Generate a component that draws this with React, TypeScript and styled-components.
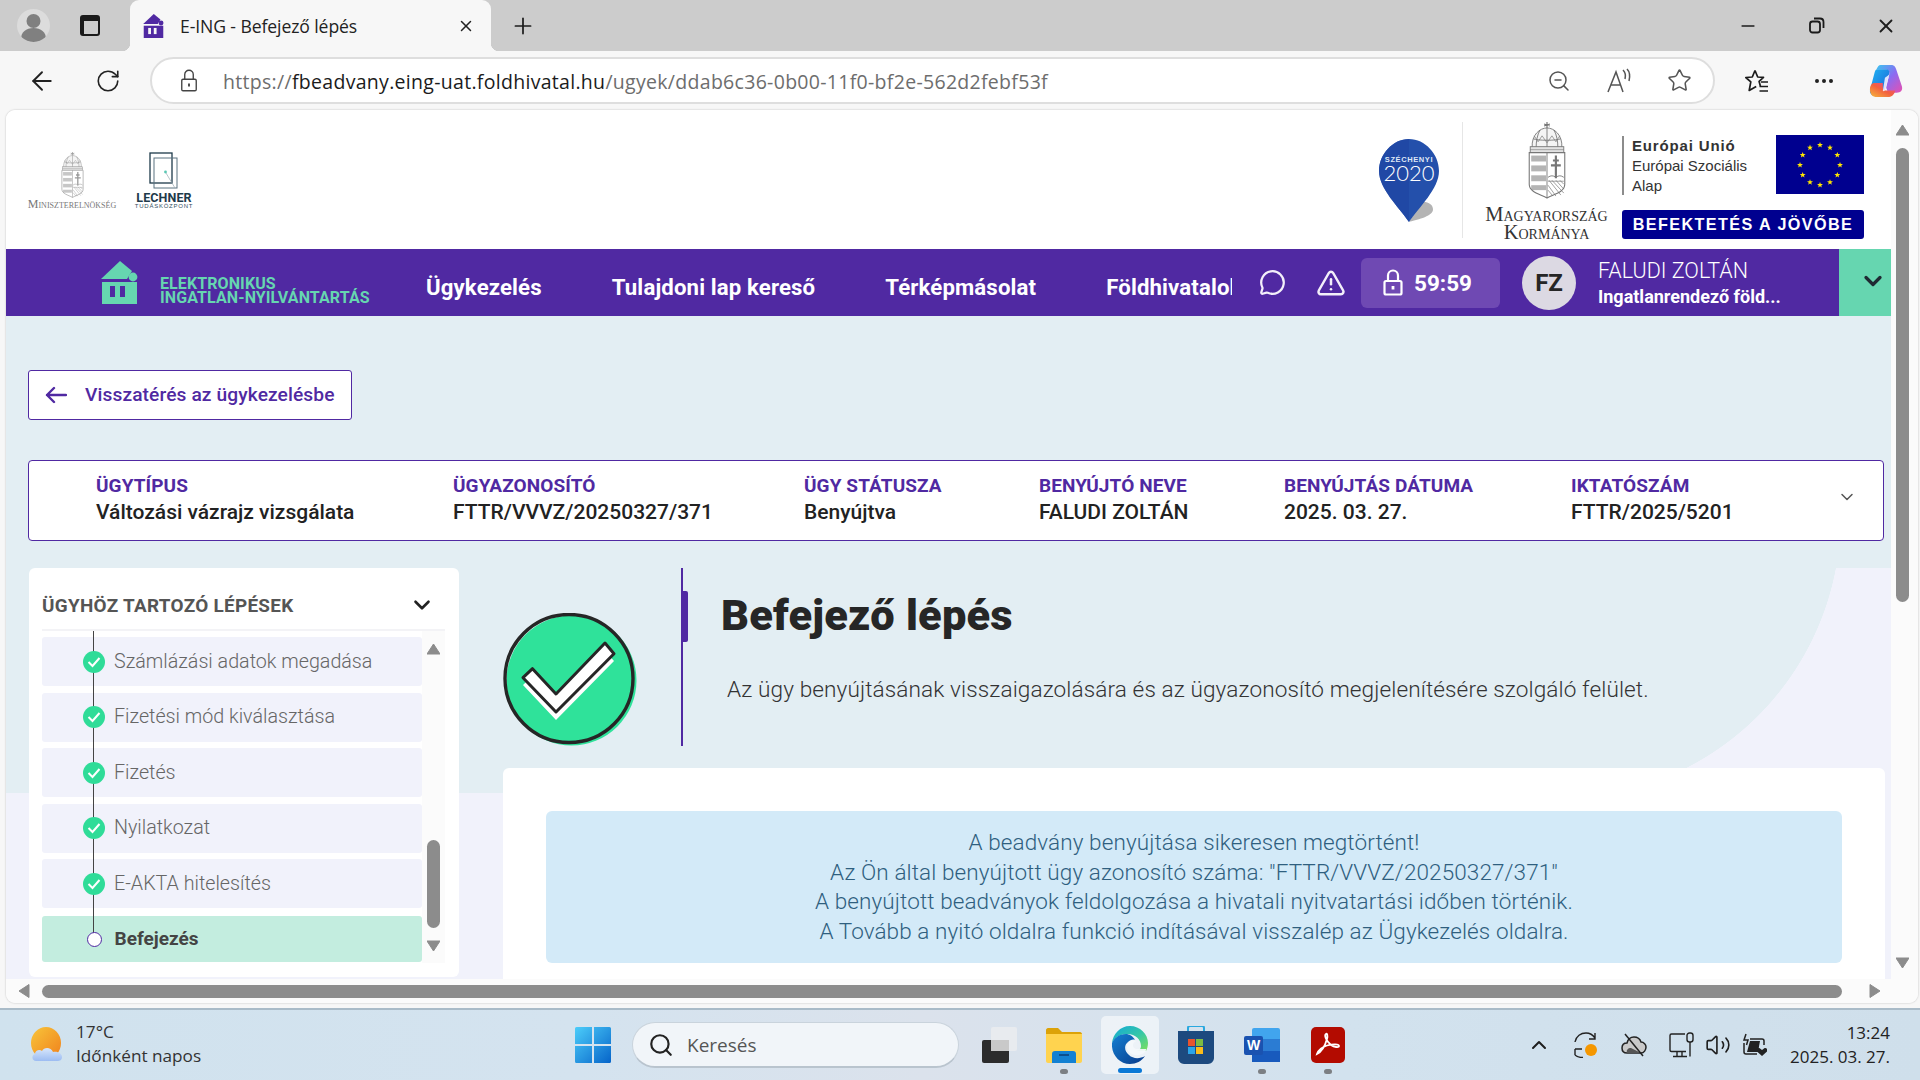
import React from 'react';
import styled, { createGlobalStyle } from 'styled-components';
import { RotateCw, ZoomOut, Star, Ellipsis, Minus, X, Plus, ChevronDown, ChevronUp, MessageCircle, TriangleAlert, Search, Volume2, ArrowLeft } from 'lucide-react';

const Global = createGlobalStyle`
  html, body { margin: 0; padding: 0; overflow: hidden; background: #f7f7f7; }
  * { box-sizing: border-box; }
  #root { width: 1920px; height: 1080px; }
`;

const APP = `"Roboto", "Open Sans", sans-serif`;
const SYS = `"Open Sans", "Noto Sans", sans-serif`;
const PURPLE = '#5029a2';

const Screen = styled.div`
  width: 1920px; height: 1080px; display: flex; flex-direction: column; overflow: hidden;
  font-family: ${APP}; background: #f7f7f7;
`;

/* ---------- browser chrome ---------- */
const TabStrip = styled.div`
  height: 51px; flex: none; background: #cccccc; display: flex; align-items: stretch; padding-left: 17px; color: #1c1c1c;
`;
const Avatar = styled.div`
  width: 33px; height: 33px; margin-top: 9px; border-radius: 50%; background: #dcdcdc; display: flex; align-items: center; justify-content: center; overflow: hidden;
`;
const TabsButton = styled.div`
  width: 20px; height: 21px; margin: 15px 30px 0 30px; border: 2px solid #1a1a1a; border-radius: 3px; overflow: hidden; flex: none;
  background: linear-gradient(#1a1a1a 0 4px, transparent 4px), linear-gradient(90deg, #1a1a1a 0 2px, transparent 2px);
`;
const Tab = styled.div`
  width: 361px; background: #f7f7f7; border-radius: 9px 9px 0 0; display: flex; align-items: center; padding: 0 16px 0 13px; font-family: ${SYS}; font-size: 17.6px; color: #222; position: relative;
  &::before, &::after { content: ''; position: absolute; bottom: 0; width: 8px; height: 8px; }
  &::before { left: -8px; background: radial-gradient(circle at 0 0, transparent 8px, #f7f7f7 8.5px); }
  &::after { right: -8px; background: radial-gradient(circle at 100% 0, transparent 8px, #f7f7f7 8.5px); }
`;
const TabTitle = styled.span`
  margin-left: 16px; flex: 1; letter-spacing: -0.1px;
`;
const NewTab = styled.div`
  margin-left: 19px; display: flex; align-items: center;
`;
const WinControls = styled.div`
  margin-left: auto; display: flex; align-items: center;
`;
const WinBtn = styled.div`
  width: 69px; height: 51px; display: flex; align-items: center; justify-content: center;
`;

const ToolBar = styled.div`
  height: 59px; flex: none; background: #f7f7f7; display: flex; align-items: center; color: #222;
`;
const NavBtn = styled.div<{ $w: number }>`
  width: ${p => p.$w}px; flex: none; display: flex; align-items: center; justify-content: center;
`;
const AddressBar = styled.div`
  width: 1565px; height: 47px; margin-left: 18px; flex: none; background: #fff; border: 2px solid #dedede; border-radius: 24px; display: flex; align-items: center; padding: 0 0 0 28px;
`;
const Url = styled.div`
  margin-left: 25px; padding-top: 1px; font-family: ${SYS}; font-size: 19.5px; color: #6d6d6d; flex: 1; white-space: nowrap; letter-spacing: 0.3px;
`;
const UrlHost = styled.span`color: #1b1b1b;`;
const AddrIcons = styled.div`
  display: flex; align-items: center; gap: 35px; padding-right: 21px; color: #555;
`;
const ToolRight = styled.div`
  display: flex; align-items: center; margin-left: 28px;
`;
const ToolIcon = styled.div<{ $w: number }>`
  width: ${p => p.$w}px; flex: none; display: flex; justify-content: center; align-items: center;
  & > svg { flex: none; }
`;

/* ---------- viewport ---------- */
const ViewportWrap = styled.div`
  flex: none; height: 898px; padding: 0 2px 5px 6px; background: #f7f7f7;
`;
const Viewport = styled.div`
  height: 893px; background: #fbfbfb; border-radius: 9px; overflow: hidden; display: flex; flex-direction: column; box-shadow: 0 0 2px rgba(0,0,0,.25);
`;
const ViewportUpper = styled.div`
  display: flex; height: 869px; flex: none;
`;
const Page = styled.div`
  width: 1885px; flex: none; display: flex; flex-direction: column; overflow: hidden;
`;
const VScroll = styled.div`
  width: 27px; flex: none; background: #fbfbfb; display: flex; flex-direction: column; align-items: flex-start; padding: 14px 0 0 5px;
`;
const BigThumbV = styled.div`
  width: 13px; height: 454px; margin-top: 12px; background: #8c8c8c; border-radius: 7px;
`;
const VArrowDown = styled.div`
  margin-top: 355px;
`;
const HScroll = styled.div`
  height: 24px; flex: none; display: flex; align-items: center; padding-left: 12px; background: #fbfbfb;
`;
const HThumb = styled.div`
  width: 1800px; height: 13px; margin-left: 12px; background: #8c8c8c; border-radius: 7px;
`;
const HArrowRight = styled.div`
  margin-left: 27px; display: flex;
`;

const Arrow: React.FC<{ dir: 'up' | 'down' | 'left' | 'right'; size?: number }> = ({ dir, size = 13 }) => {
  const pts = { up: '6.5,1 13,11 0,11', down: '0,1 13,1 6.5,11', left: '11,0 11,13 1,6.5', right: '1,0 11,6.5 1,13' }[dir];
  const horiz = dir === 'left' || dir === 'right';
  return (
    <svg width={horiz ? 12 : size} height={horiz ? 14 : 12} viewBox={horiz ? '0 0 12 13' : '0 0 13 12'} style={{ display: 'block' }}>
      <polygon points={pts} fill="#8c8c8c" stroke="#8c8c8c" strokeLinejoin="round" strokeWidth="1" />
    </svg>
  );
};

/* ---------- header ---------- */
const Header = styled.header`
  height: 139px; flex: none; background: #fff; display: flex; align-items: flex-start; justify-content: space-between; padding: 12px 27px 0 22px;
`;
const HeaderLeft = styled.div`
  display: flex; padding-top: 30px; gap: 21px;
`;
const MiniLogo = styled.div`
  display: flex; flex-direction: column; align-items: center; width: 88px;
`;
const MiniText = styled.div`
  font-family: "Liberation Serif", serif; font-size: 12px; color: #777; margin-top: 1px; white-space: nowrap; font-variant: small-caps; line-height: 11px;
`;
const LechnerLogo = styled.div`
  display: flex; flex-direction: column; align-items: center; width: 54px;
`;
const LechnerName = styled.div`
  font-family: ${APP}; font-weight: 700; font-size: 12.5px; line-height: 11px; margin-top: 2px; color: #1e3a4a; letter-spacing: 0.1px;
`;
const LechnerSub = styled.div`
  font-family: "Liberation Sans", sans-serif; font-size: 6px; line-height: 7px; letter-spacing: 0.75px; color: #33505f; white-space: nowrap;
`;
const HeaderRight = styled.div`
  display: flex; align-items: flex-start;
`;
const PinWrap = styled.div`
  margin-top: 17px; width: 62px; margin-right: 21px;
`;
const SideDivider = styled.div`
  width: 1px; height: 116px; background: #e6e6e6; margin-right: 20px;
`;
const GovBlock = styled.div`
  width: 127px; display: flex; flex-direction: column; align-items: center; margin-right: 12px;
`;
const GovName = styled.div`
  font-family: "Liberation Serif", serif; font-size: 20.5px; line-height: 17.5px; color: #333; text-align: center; font-variant: small-caps; margin-top: 7px; white-space: nowrap;
`;
const EuBlock = styled.div`
  width: 242px; display: flex; flex-direction: column;
`;
const EuTop = styled.div`
  display: flex; justify-content: space-between; margin-top: 13px; height: 60px; align-items: flex-start;
`;
const EuText = styled.div`
  border-left: 2px solid #8c8c8c; padding-left: 8px; font-family: "Liberation Sans", sans-serif; font-size: 15px; line-height: 20px; color: #333; height: 59px; margin-top: 1px;
`;
const EuBold = styled.div`
  font-weight: 700; letter-spacing: 0.85px;
`;
const EuButton = styled.div`
  margin-top: 15px; height: 29px; background: #00008f; border-radius: 3px; color: #fff; font-family: "Liberation Sans", sans-serif; font-weight: 700; font-size: 16.2px; letter-spacing: 1.4px; display: flex; align-items: center; justify-content: center; white-space: nowrap;
`;

/* ---------- nav ---------- */
const Nav = styled.nav`
  height: 67px; flex: none; background: ${PURPLE}; display: flex; align-items: center;
`;
const Brand = styled.div`
  width: 420px; flex: none; padding-left: 95px; display: flex; align-items: flex-start; height: 100%; padding-top: 12px;
`;
const BrandText = styled.div`
  margin-left: 22px; margin-top: 16px; color: #66d6b0; font-weight: 700; font-size: 16px; line-height: 13.5px; letter-spacing: 0.1px; white-space: nowrap; font-family: ${APP};
`;
const NavItems = styled.div`
  width: 806px; flex: none; display: flex; gap: 70px; overflow: hidden; white-space: nowrap; margin-top: 8px;
`;
const NavItem = styled.div`
  color: #fff; font-weight: 700; font-size: 22.2px; letter-spacing: 0.13px; flex: none;
`;
const NavIconComment = styled.div`
  margin-left: 27px; width: 27px; display: flex; color: #f3effa;
`;
const NavIconWarn = styled.div`
  margin-left: 30px; width: 30px; display: flex; color: #f3effa;
`;
const Timer = styled.div`
  margin-left: 15px; width: 139px; height: 50px; flex: none; background: #6f49b3; border-radius: 6px; display: flex; align-items: center; padding-left: 22px; color: #fff;
`;
const TimerText = styled.span`
  margin-left: 11px; font-weight: 700; font-size: 22.5px;
`;
const UserAvatar = styled.div`
  margin-left: 22px; width: 54px; height: 54px; flex: none; border-radius: 50%; background: #dcd9e3; color: #262626; display: flex; align-items: center; justify-content: center; font-weight: 700; font-size: 24px;
`;
const UserInfo = styled.div`
  margin-left: 22px; width: 241px; flex: none; color: #fff; white-space: nowrap; padding-top: 3px;
`;
const UserName = styled.div`
  font-size: 21.5px; font-weight: 300; line-height: 27px; margin-top: -2px;
`;
const UserRole = styled.div`
  font-size: 18px; font-weight: 700; line-height: 24px; margin-top: 1px;
`;
const UserToggle = styled.div`
  width: 52px; height: 100%; flex: none; background: #66d6b0; display: flex; align-items: center; justify-content: center; color: #1f2a33; padding: 0 0 4px 16px;
`;

/* ---------- content ---------- */
const Content = styled.main`
  height: 663px; flex: none; overflow: hidden; padding: 54px 7px 0 22px;
  background:
    radial-gradient(circle 283px at 0px -52px, transparent 99.8%, #f1f2fb 100%) right 0 top 252px / 333px 225px no-repeat,
    linear-gradient(#e3eef3 0 477px, #f1f2fb 477px);
`;
const BackButton = styled.div`
  width: 324px; height: 50px; background: #fff; border: 1px solid ${PURPLE}; border-radius: 3px; display: flex; align-items: center; padding: 0 0 1px 16px; color: ${PURPLE}; font-weight: 500; font-size: 19.2px; letter-spacing: 0.1px;
`;
const BackLabel = styled.span`
  margin-left: 18px;
`;
const InfoBox = styled.div`
  margin-top: 40px; height: 81px; background: #fff; border: 1px solid ${PURPLE}; border-radius: 4px; display: grid; grid-template-columns: 357px 351px 235px 245px 287px 1fr; align-items: center; padding-left: 67px; position: relative;
`;
const InfoLabel = styled.div`
  color: ${PURPLE}; font-weight: 700; font-size: 19px; line-height: 23px; letter-spacing: 0.1px; white-space: nowrap; margin-top: -1px;
`;
const InfoValue = styled.div`
  color: #222; font-weight: 500; font-size: 21px; line-height: 30px; white-space: nowrap;
`;
const InfoToggle = styled.div`
  position: absolute; right: 26px; top: 26px; color: #555; display: flex;
`;
const Columns = styled.div`
  margin-top: 27px; display: grid; grid-template-columns: 430px 1382px; column-gap: 44px; margin-left: 1px; width: 1856px;
`;

const StepsPanel = styled.aside`
  height: 409px; background: #fff; border-radius: 6px; padding: 0 14px 0 13px; display: flex; flex-direction: column;
`;
const StepsHead = styled.div`
  height: 63px; flex: none; display: flex; align-items: center; justify-content: space-between; padding-top: 13px; padding-right: 10px; border-bottom: 2px solid #f3f3f6;
`;
const StepsTitle = styled.div`
  font-weight: 700; font-size: 18.9px; letter-spacing: 0.3px; color: #555; white-space: nowrap;
`;
const StepsBody = styled.div`
  display: flex; height: 332px; flex: none; background: #fbfbfb;
`;
const StepsList = styled.div`
  width: 380px; flex: none; background: #fff; padding-top: 6px; display: flex; flex-direction: column; gap: 6.5px; position: relative; overflow: hidden;
`;
const StepLine = styled.div`
  position: absolute; left: 51px; top: 0; width: 1px; height: 308px; background: #444;
`;
const Step = styled.div<{ $active?: boolean }>`
  height: ${p => (p.$active ? 46 : 49)}px; flex: none; border-radius: 3px; background: ${p => (p.$active ? '#c3eddf' : '#f1f2fb')}; display: flex; align-items: center; padding-left: 41px; color: ${p => (p.$active ? '#444' : '#666')}; font-size: ${p => (p.$active ? 19 : 19.7)}px; font-weight: ${p => (p.$active ? 700 : 300)}; white-space: nowrap; margin-top: ${p => (p.$active ? 1.5 : 0)}px;
`;
const StepLabel = styled.span`
  padding-bottom: 1px;
`;
const StepCheck = styled.div`
  width: 22px; height: 22px; flex: none; border-radius: 50%; background: #2fdc98; display: flex; align-items: center; justify-content: center; margin-right: 9px; position: relative;
`;
const StepOpen = styled.div`
  width: 15px; height: 15px; flex: none; border-radius: 50%; background: #fff; border: 1.5px solid ${PURPLE}; margin: 0 13px 0 3.5px; position: relative;
`;
const StepsScroll = styled.div`
  width: 23px; flex: none; display: flex; flex-direction: column; align-items: flex-start; padding: 12px 0 0 5px;
`;
const StepsThumb = styled.div`
  width: 13px; height: 88px; margin-top: 185px; background: #8c8c8c; border-radius: 7px;
`;
const StepsArrowDown = styled.div`
  margin-top: 12px;
`;

const MainCol = styled.section`
  display: flex; flex-direction: column;
`;
const Hero = styled.div`
  height: 178px; flex: none; display: flex; align-items: flex-start;
`;
const HeroIcon = styled.div`
  width: 134px; margin-top: 45px; flex: none;
`;
const HeroText = styled.div`
  margin-left: 44px; height: 178px; border-left: 2px solid ${PURPLE}; padding-left: 38px; position: relative;
`;
const HeroAccent = styled.div`
  position: absolute; left: 0; top: 23px; width: 5px; height: 51px; background: ${PURPLE}; border-radius: 0 2px 2px 0;
`;
const HeroTitle = styled.h1`
  margin: 23px 0 0 0; font-family: ${APP}; font-weight: 900; font-size: 43.4px; line-height: 50px; color: #262626; letter-spacing: 0.2px;
`;
const HeroDesc = styled.p`
  margin: 34px 0 0 6px; font-size: 22.6px; line-height: 30px; font-weight: 300; color: #333; white-space: nowrap; letter-spacing: 0.1px;
`;
const WhiteCard = styled.div`
  margin-top: 22px; height: 260px; background: #fff; border-radius: 6px; padding: 43px 43px;
`;
const Alert = styled.div`
  height: 152px; background: #d3eaf8; border-radius: 6px; text-align: center; color: #2f5f7f; font-size: 22.5px; font-weight: 300; line-height: 29.5px; padding-top: 17px; letter-spacing: 0.1px;
`;

/* ---------- taskbar ---------- */
const Taskbar = styled.footer`
  height: 72px; flex: none; border-top: 2px solid #a9bbc8; background: linear-gradient(90deg, #d0e2ee 0%, #d4e3ef 30%, #dbe2ec 48%, #d2e2ee 70%, #cfdfeb 100%); display: flex; align-items: center; font-family: ${SYS}; color: #222;
`;
const Weather = styled.div`
  width: 575px; flex: none; display: flex; align-items: center; padding-left: 30px;
`;
const WeatherText = styled.div`
  margin-left: 10px; margin-top: -2px; font-size: 17.2px; line-height: 24px; color: #333;
`;
const SearchPill = styled.div`
  width: 327px; height: 46px; margin-left: 21px; flex: none; background: #f1f5f9; border-radius: 23px; border: 1px solid #c9d3dc; border-bottom: 2px solid #b9c4ce; display: flex; align-items: center; padding-left: 15px; font-size: 19px; color: #555;
`;
const SearchLabel = styled.span`
  margin-left: 13px;
`;
const TaskApps = styled.div`
  display: flex; align-items: center; margin-left: 10px;
`;
const TaskApp = styled.div<{ $active?: boolean }>`
  width: ${p => (p.$active ? 58 : 66)}px; height: 58px; margin: 0 ${p => (p.$active ? 4 : 0)}px; display: flex; align-items: center; justify-content: center; position: relative; border-radius: 5px; background: ${p => (p.$active ? 'rgba(255,255,255,.55)' : 'transparent')};
`;
const TaskViewTile = styled(TaskApp)`
  width: 62px;
`;
const TaskDot = styled.div`
  position: absolute; bottom: 0; left: 50%; margin-left: -4px; width: 8px; height: 5px; border-radius: 3px; background: #7c7f83;
`;
const TaskBarActive = styled.div`
  position: absolute; bottom: 1px; left: 50%; margin-left: -12px; width: 24px; height: 5px; border-radius: 3px; background: #0a78d6;
`;
const Tray = styled.div`
  margin-left: auto; display: flex; align-items: center; gap: 22px; color: #1e1e1e;
`;
const TrayTight = styled.div`
  display: flex; margin-left: -12px;
`;
const Clock = styled.div`
  margin-left: 1px; padding-right: 30px; text-align: right; font-size: 17px; line-height: 24px; color: #222; white-space: nowrap;
`;

/* ---------- drawings ---------- */
const House: React.FC<{ color: string; slot: string; w: number; h: number }> = ({ color, slot, w, h }) => (
  <svg width={w} height={h} viewBox="0 0 37 43">
    <polygon points="19,0 31,10 26,18 0,18" fill={color} />
    <circle cx="32" cy="16" r="4.4" fill={color} />
    <path d="M1 21H36V43H1Z" fill={color} />
    <rect x="9" y="25" width="5" height="11" fill={slot} />
    <rect x="19" y="25" width="5" height="11" fill={slot} />
  </svg>
);

const Crest: React.FC<{ w: number; h: number; c: string }> = ({ w, h, c }) => (
  <svg width={w} height={h} viewBox="0 0 38 78" fill="none" stroke={c} strokeWidth="0.9">
    <path d="M19 0v6M16 2l6 2M22 2l-6 2" strokeWidth="1.2" />
    <path d="M4 26C3 13 12 6 19 6s16 7 15 20Z" fill="#f4f4f4" />
    <path d="M19 6v20M12 8c-3 5-4 12-4 18M26 8c3 5 4 12 4 18M5 17c5 2 23 2 28 0" />
    <path d="M6 14l4 6 4-6 5 7 5-7 4 6 4-6" strokeWidth=".7" />
    <rect x="2" y="25" width="34" height="6" fill="#e2e2e2" />
    <path d="M2 28h34" strokeWidth=".6" />
    <path d="M1 31H37V63C37 71 26 73 19 77 12 73 1 71 1 63Z" fill="#fff" strokeWidth="1.1" />
    <path d="M19 31V77" />
    <rect x="3" y="34" width="15" height="6" fill={c} opacity=".55" stroke="none" />
    <rect x="3" y="44" width="15" height="6" fill={c} opacity=".55" stroke="none" />
    <rect x="3" y="54" width="15" height="6" fill={c} opacity=".55" stroke="none" />
    <rect x="3" y="64" width="15" height="5" fill={c} opacity=".55" stroke="none" />
    <path d="M28 34V57M25 39H31M23 44H33" strokeWidth="2.2" />
    <path d="M20 56c3-2 5-2 8 0 3-2 5-2 8 0" />
    <path d="M20 60l16 0M21 59l12 15M24 59l12 13M28 59l8 9M20 64l8 11M20 69l5 6M32 59l4 4" strokeWidth=".7" />
  </svg>
);

const LechnerMark: React.FC = () => (
  <svg width="30" height="38" viewBox="0 0 30 38" fill="none">
    <rect x="1" y="1" width="22" height="30" stroke="#1e3a4a" strokeWidth="1.3" />
    <rect x="5" y="6" width="23" height="30" stroke="#5b7280" strokeWidth="1" />
    <circle cx="16.5" cy="20" r="1.4" fill="#58c7b3" />
    <path d="M17 21l9 15" stroke="#9aa9b2" strokeWidth=".7" />
  </svg>
);

const Pin: React.FC = () => (
  <svg width="62" height="84" viewBox="0 0 62 84">
    <path d="M30 83C36 81 53 78 54 71c.5-5-5-9-12-8Z" fill="#b4b4b4" />
    <path d="M30 0C14 0 0 15 0 32c0 18 20 36 30 51C40 68 60 50 60 32 60 15 46 0 30 0Z" fill="#2450ab" />
    <path d="M30 0C14 0 0 15 0 32c0 18 20 36 30 51Z" fill="#1f45a3" opacity=".7" />
    <text x="30" y="23" textAnchor="middle" fontFamily="Liberation Sans, sans-serif" fontWeight="700" fontSize="7.5" letterSpacing=".6" fill="#dfe7f6">SZÉCHENYI</text>
    <text x="30" y="42" textAnchor="middle" fontFamily="Lato, sans-serif" fontWeight="300" fontSize="22" fill="#fff">2020</text>
  </svg>
);

const star = (cx: number, cy: number, r: number) => {
  const p: string[] = [];
  for (let i = 0; i < 10; i++) {
    const a = -Math.PI / 2 + (i * Math.PI) / 5;
    const q = i % 2 ? r * 0.42 : r;
    p.push(`${(cx + q * Math.cos(a)).toFixed(2)},${(cy + q * Math.sin(a)).toFixed(2)}`);
  }
  return p.join(' ');
};

const EuFlag: React.FC = () => (
  <svg width="88" height="59" viewBox="0 0 88 59">
    <rect width="88" height="59" fill="#00008f" />
    {Array.from({ length: 12 }).map((_, i) => {
      const a = (i * Math.PI) / 6;
      return <polygon key={i} points={star(44 + 20 * Math.sin(a), 30 - 20 * Math.cos(a), 3.1)} fill="#ffe600" />;
    })}
  </svg>
);

const SuccessIcon: React.FC = () => (
  <svg width="136" height="134" viewBox="0 0 136 134">
    <circle cx="68.5" cy="67.5" r="65" fill="#2fe29a" />
    <polygon points="20,72 53,107 111,48 102,38 53,89 29,63" fill="#fff" />
    <polygon points="29.5,55.7 53,81 102,30 111,40.7 53,99 20,64.7" fill="#fff" stroke="#262626" strokeWidth="3" strokeLinejoin="round" />
    <circle cx="66" cy="65.5" r="64" fill="none" stroke="#262626" strokeWidth="3.4" />
  </svg>
);

const SmallCheck: React.FC = () => (
  <svg width="14" height="12" viewBox="0 0 14 12" fill="none"><path d="M1.5 6l4 4L12.5 2" stroke="#fff" strokeWidth="2" /></svg>
);

const TallLock: React.FC<{ w: number; h: number; c: string; sw: number }> = ({ w, h, c, sw }) => (
  <svg width={w} height={h} viewBox="0 0 20 27" fill="none" stroke={c} strokeWidth={sw}>
    <path d="M5 12V6.500a5 5 0 0 1 10 0V12" />
    <rect x="1.500" y="12" width="17" height="13.500" rx="1.500" />
    <path d="M10 17v3.500" strokeWidth={sw + 0.6} />
  </svg>
);

const LongArrow: React.FC = () => (
  <svg width="22" height="18" viewBox="0 0 22 18" fill="none" stroke={PURPLE} strokeWidth="2.4" strokeLinecap="round" strokeLinejoin="round">
    <path d="M2 9H21M9 2L2 9l7 7" />
  </svg>
);

const Copilot: React.FC = () => (
  <svg width="36" height="36" viewBox="0 0 34 34">
    <defs>
      <linearGradient id="cpA" x1="0" y1="0" x2="1" y2="1"><stop offset="0" stopColor="#1fb6f2" /><stop offset="1" stopColor="#1c5fd8" /></linearGradient>
      <linearGradient id="cpB" x1="0" y1="1" x2="1" y2="0"><stop offset="0" stopColor="#f6b73c" /><stop offset=".5" stopColor="#f2603f" /><stop offset="1" stopColor="#e64aa6" /></linearGradient>
      <linearGradient id="cpC" x1="0" y1="0" x2="1" y2="1"><stop offset="0" stopColor="#3bc5f0" /><stop offset=".5" stopColor="#8b6bf2" /><stop offset="1" stopColor="#e64fb0" /></linearGradient>
    </defs>
    <path d="M12 2h10c3 0 4 2 5 5l5 15c1 4-1 6-5 6H19l-2-5 3-12c.6-3-1-5-4-5H8c1-2 2-4 4-4Z" fill="url(#cpC)" />
    <path d="M9 6h8c2.600 0 3.600 2 3 4l-4 15c-.8 3-3 6-6 6H7c-3 0-6-2-5-6l4-15C6.500 8 7 6 9 6Z" fill="url(#cpA)" />
    <path d="M2 23c-.8 4 1 9 5 9h13c3 0 5-3 6-6l-9 0c-2 0-3-1-3-3v-4H6c-2 0-3.600 2-4 4Z" fill="url(#cpB)" />
    <path d="M16 14l4-3-3 13c-.5 2-2 3-3 2.500Z" fill="#f5f0ff" opacity=".9" />
  </svg>
);

const FavStar: React.FC = () => (
  <svg width="26" height="26" viewBox="0 0 26 26" fill="none" stroke="#1c1c1c" strokeWidth="1.7" strokeLinejoin="round">
    <path d="M11 2.500l2.700 6.500 5.800.4-4.400 4 1.300 4.600M11 2.500L8.300 9l-6.500.5 5 4.300-1.600 8.700 7-4" />
    <path d="M17 14h7M15.500 18.500h8.500M15.500 23h8.500" />
  </svg>
);

const Restore: React.FC = () => (
  <svg width="16" height="17" viewBox="0 0 16 17" fill="none" stroke="#1a1a1a" strokeWidth="1.8">
    <rect x="1" y="4.500" width="10" height="11" rx="2.500" />
    <path d="M5 1.500h6c2 0 3.500 1.500 3.500 3.500v6" />
  </svg>
);

const WeatherIcon: React.FC = () => (
  <svg width="36" height="36" viewBox="0 0 36 36">
    <defs>
      <linearGradient id="sun" x1="0" y1="0" x2="1" y2="1"><stop offset="0" stopColor="#f8c53a" /><stop offset="1" stopColor="#f0801c" /></linearGradient>
      <linearGradient id="cl" x1="0" y1="0" x2="0" y2="1"><stop offset="0" stopColor="#d7e6fb" /><stop offset="1" stopColor="#9cbcf2" /></linearGradient>
    </defs>
    <ellipse cx="16" cy="16" rx="15" ry="16" fill="url(#sun)" />
    <path d="M6 34c-4 0-5-6-1-7 0-4 5-5 7-3 2-4 9-4 11 1 5-1 9 2 9 5s-2 4-5 4Z" fill="url(#cl)" />
  </svg>
);

const WinLogo: React.FC = () => (
  <svg width="36" height="36" viewBox="0 0 36 36">
    <defs><linearGradient id="wl" x1="0" y1="0" x2="1" y2="1"><stop offset="0" stopColor="#4ccdfa" /><stop offset="1" stopColor="#0664c9" /></linearGradient></defs>
    <path d="M0 1.500A1.500 1.500 0 0 1 1.500 0H17V17H0ZM19 0H34.500A1.500 1.500 0 0 1 36 1.500V17H19ZM0 19H17V36H1.500A1.500 1.500 0 0 1 0 34.500ZM19 19H36V34.500A1.500 1.500 0 0 1 34.500 36H19Z" fill="url(#wl)" />
  </svg>
);

const TaskViewIcon: React.FC = () => (
  <svg width="36" height="36" viewBox="0 0 36 36">
    <rect x="0" y="13" width="27" height="23" rx="2" fill="#2c2c2c" />
    <rect x="9" y="0" width="26" height="24" rx="2" fill="#e9ecef" opacity=".92" />
    <rect x="9" y="13" width="18" height="11" fill="#c9c9c9" />
  </svg>
);
const ExplorerIcon: React.FC = () => (
  <svg width="36" height="36" viewBox="0 0 36 36">
    <path d="M0 3c0-1 1-2 2-2h10l4 4h18c1 0 2 1 2 2v6H0Z" fill="#dca208" />
    <path d="M0 7h36v27c0 1-1 2-2 2H2c-1 0-2-1-2-2Z" fill="#ffd34f" />
    <path d="M6 36V27c0-2 1-3 3-3h18c2 0 3 1 3 3v9Z" fill="#1481d2" />
    <rect x="13" y="27" width="10" height="2" fill="#0d4f8f" />
  </svg>
);
const EdgeIcon: React.FC = () => (
  <svg width="36" height="38" viewBox="0 0 36 38">
    <defs>
      <linearGradient id="ed1" x1="0" y1="0" x2="1" y2="1"><stop offset="0" stopColor="#12a8d8" /><stop offset=".55" stopColor="#36c7a6" /><stop offset="1" stopColor="#7fe05b" /></linearGradient>
      <linearGradient id="ed2" x1="0" y1="0" x2="1" y2="1"><stop offset="0" stopColor="#1580d3" /><stop offset="1" stopColor="#083a8a" /></linearGradient>
    </defs>
    <path d="M18 0C8 0 1 8 0 17c3-6 9-9 15-9 9 0 14 6 14 12 0 2-1 4-4 5h9c1-2 2-5 2-8C36 8 28 0 18 0Z" fill="url(#ed1)" />
    <path d="M0 17c-1 11 7 21 18 21 6 0 12-3 15-8-5 3-12 3-16-1-5-4-5-10-1-13 2-2 5-3 7-2-2-4-6-6-9-6C7 8 2 12 0 17Z" fill="url(#ed2)" />
    <path d="M17 16c-3 3-3 8 1 11 4 3 11 3 15-1 1-1 1-2 1-3h-8c-4 0-5-2-5-4 0-1 1-3 3-4-3-1-5-1-7 1Z" fill="#f4f8fb" opacity=".95" />
  </svg>
);
const StoreIcon: React.FC = () => (
  <svg width="36" height="38" viewBox="0 0 36 38">
    <path d="M10 5V2c0-1 1-2 2-2h12c1 0 2 1 2 2v3" fill="none" stroke="#2aa8df" strokeWidth="2" />
    <path d="M0 5h36v27c0 3-3 6-6 6H6c-3 0-6-3-6-6Z" fill="#1d4a7f" />
    <rect x="10" y="13" width="7" height="7" fill="#e8542d" /><rect x="18" y="13" width="7" height="7" fill="#7dbb42" />
    <rect x="10" y="21" width="7" height="7" fill="#2ba4e8" /><rect x="18" y="21" width="7" height="7" fill="#fbbc1a" />
  </svg>
);
const WordIcon: React.FC = () => (
  <svg width="36" height="36" viewBox="0 0 36 36">
    <rect x="8" y="1" width="28" height="34" rx="2" fill="#41a5ee" />
    <rect x="8" y="12" width="28" height="12" fill="#2b7cd3" />
    <rect x="8" y="24" width="28" height="11" fill="#185abd" />
    <rect x="0" y="9" width="19" height="19" rx="2" fill="#1a52b0" />
    <text x="9.500" y="23" textAnchor="middle" fontFamily="Liberation Sans, sans-serif" fontWeight="700" fontSize="14" fill="#fff">W</text>
  </svg>
);
const AcrobatIcon: React.FC = () => (
  <svg width="34" height="36" viewBox="0 0 34 36">
    <rect width="34" height="36" rx="5" fill="#b30b00" />
    <path d="M6 27c4-2 8-8 10-15 1-4 0-6-1-5-2 1 0 7 5 11 3 2 8 3 8 1s-6-2-12-.500c-4 1-9 5-10 8.500Z" fill="none" stroke="#fff" strokeWidth="1.8" />
  </svg>
);
const TrayChevron = styled.div`display: flex; color: #1e1e1e;`;
const SyncIcon: React.FC = () => (
  <svg width="26" height="26" viewBox="0 0 26 26" fill="none" stroke="#222" strokeWidth="1.4">
    <path d="M2 10C3 4 8 1 13 1c4 0 7 2 9 5M22 1v6h-6" />
    <path d="M2 17h7M2 17v6M2 23c2 2 5 2.500 8 2.500" />
    <circle cx="18" cy="18" r="6" fill="#f59700" stroke="none" />
  </svg>
);
const CloudOff: React.FC = () => (
  <svg width="26" height="24" viewBox="0 0 26 24">
    <path d="M6 20C2 20 1 17 1 15c0-3 2-5 5-5 1-4 4-6 7-6 4 0 6 2 7 5 3 0 5 3 5 5 0 3-2 6-5 6Z" fill="#c9c9c9" stroke="#222" strokeWidth="1.5" />
    <path d="M6 20c-1-3 1-5 4-5l10 5Z" fill="#555" />
    <path d="M4 1l18 22" stroke="#222" strokeWidth="1.5" />
  </svg>
);
const NetIcon: React.FC = () => (
  <svg width="26" height="26" viewBox="0 0 26 26" fill="none" stroke="#222" strokeWidth="1.4">
    <path d="M16 2H2.500A1.500 1.500 0 0 0 1 3.500V18a1.500 1.500 0 0 0 1.500 1.500H17" />
    <path d="M8 19.500V24M13 19.500V24M4 24.500H18" />
    <rect x="18" y="1" width="6" height="9" rx="2.500" /><path d="M21 10V24.500" />
  </svg>
);
const BatteryIcon: React.FC = () => (
  <svg width="26" height="26" viewBox="0 0 26 26" fill="none" stroke="#222" strokeWidth="1.5">
    <path d="M5 2l-2 6h4l-1.500 5" />
    <path d="M3 11v9c0 1 1 2 2 2h11M9 7h12c1 0 2 1 2 2v4" />
    <path d="M6 20l3-11h10l-2 11Z" fill="#222" stroke="none" />
    <path d="M21 24l-5-4.500c-1.500-2 1-4.500 3-3l2 1.500 2-1.500c2-1.500 4.500 1 3 3Z" fill="#222" stroke="none" />
  </svg>
);

const ProfileIcon: React.FC = () => (
  <svg width="33" height="33" viewBox="0 0 33 33">
    <circle cx="16.500" cy="12" r="7" fill="#808080" />
    <path d="M4 30c0-7 5-11 12.500-11S29 23 29 30c-3 2-7 3-12.500 3S7 32 4 30Z" fill="#808080" />
  </svg>
);

const ReadAloud: React.FC = () => (
  <svg width="26" height="26" viewBox="0 0 26 26" fill="none" stroke="#555" strokeWidth="1.5">
    <path d="M2 24L10 4l7 20M5 17h10" />
    <path d="M17 2c2 2 3 5 2 9M21 1c3 3 3 8 2 12" />
  </svg>
);

const steps = ['Számlázási adatok megadása', 'Fizetési mód kiválasztása', 'Fizetés', 'Nyilatkozat', 'E-AKTA hitelesítés'];
const info = [
  ['ÜGYTÍPUS', 'Változási vázrajz vizsgálata'],
  ['ÜGYAZONOSÍTÓ', 'FTTR/VVVZ/20250327/371'],
  ['ÜGY STÁTUSZA', 'Benyújtva'],
  ['BENYÚJTÓ NEVE', 'FALUDI ZOLTÁN'],
  ['BENYÚJTÁS DÁTUMA', '2025. 03. 27.'],
  ['IKTATÓSZÁM', 'FTTR/2025/5201'],
];

export default function App() {
  return (
    <Screen>
      <Global />
      <TabStrip>
        <Avatar><ProfileIcon /></Avatar>
        <TabsButton />
        <Tab>
          <House color={PURPLE} slot="#f7f7f7" w={21} h={24} />
          <TabTitle>E-ING - Befejező lépés</TabTitle>
          <X size={18} strokeWidth={2} />
        </Tab>
        <NewTab><Plus size={26} strokeWidth={1.6} /></NewTab>
        <WinControls>
          <WinBtn><Minus size={20} strokeWidth={2} /></WinBtn>
          <WinBtn><Restore /></WinBtn>
          <WinBtn><X size={22} strokeWidth={2} /></WinBtn>
        </WinControls>
      </TabStrip>
      <ToolBar>
        <NavBtn $w={84}><ArrowLeft size={30} strokeWidth={1.5} /></NavBtn>
        <NavBtn $w={48}><RotateCw size={26} strokeWidth={1.5} /></NavBtn>
        <AddressBar>
          <TallLock w={18} h={23} c="#444" sw={1.6} />
          <Url>https://<UrlHost>fbeadvany.eing-uat.foldhivatal.hu</UrlHost>/ugyek/ddab6c36-0b00-11f0-bf2e-562d2febf53f</Url>
          <AddrIcons>
            <ZoomOut size={24} strokeWidth={1.5} />
            <ReadAloud />
            <Star size={25} strokeWidth={1.5} />
          </AddrIcons>
        </AddressBar>
        <ToolRight>
          <ToolIcon $w={28}><FavStar /></ToolIcon>
          <ToolIcon $w={106}><Ellipsis size={24} /></ToolIcon>
          <ToolIcon $w={18}><Copilot /></ToolIcon>
        </ToolRight>
      </ToolBar>
      <ViewportWrap>
        <Viewport>
          <ViewportUpper>
            <Page>
              <Header>
                <HeaderLeft>
                  <MiniLogo>
                    <Crest w={23} h={46} c="#999" />
                    <MiniText>Miniszterelnökség</MiniText>
                  </MiniLogo>
                  <LechnerLogo>
                    <LechnerMark />
                    <LechnerName>LECHNER</LechnerName>
                    <LechnerSub>TUDÁSKÖZPONT</LechnerSub>
                  </LechnerLogo>
                </HeaderLeft>
                <HeaderRight>
                  <PinWrap><Pin /></PinWrap>
                  <SideDivider />
                  <GovBlock>
                    <Crest w={38} h={77} c="#777" />
                    <GovName>Magyarország<br />Kormánya</GovName>
                  </GovBlock>
                  <EuBlock>
                    <EuTop>
                      <EuText>
                        <EuBold>Európai Unió</EuBold>
                        Európai Szociális<br />Alap
                      </EuText>
                      <EuFlag />
                    </EuTop>
                    <EuButton>BEFEKTETÉS A JÖVŐBE</EuButton>
                  </EuBlock>
                </HeaderRight>
              </Header>
              <Nav>
                <Brand>
                  <House color="#66d6b0" slot={PURPLE} w={37} h={43} />
                  <BrandText>ELEKTRONIKUS<br />INGATLAN-NYILVÁNTARTÁS</BrandText>
                </Brand>
                <NavItems>
                  <NavItem>Ügykezelés</NavItem>
                  <NavItem>Tulajdoni lap kereső</NavItem>
                  <NavItem>Térképmásolat</NavItem>
                  <NavItem>Földhivatalok</NavItem>
                </NavItems>
                <NavIconComment><MessageCircle size={27} strokeWidth={2} /></NavIconComment>
                <NavIconWarn><TriangleAlert size={30} strokeWidth={2} /></NavIconWarn>
                <Timer><TallLock w={20} h={27} c="#fff" sw={2.2} /><TimerText>59:59</TimerText></Timer>
                <UserAvatar>FZ</UserAvatar>
                <UserInfo>
                  <UserName>FALUDI ZOLTÁN</UserName>
                  <UserRole>Ingatlanrendező föld...</UserRole>
                </UserInfo>
                <UserToggle><ChevronDown size={28} strokeWidth={2.8} /></UserToggle>
              </Nav>
              <Content>
                <BackButton>
                  <LongArrow />
                  <BackLabel>Visszatérés az ügykezelésbe</BackLabel>
                </BackButton>
                <InfoBox>
                  {info.map(([l, v]) => (
                    <div key={l}>
                      <InfoLabel>{l}</InfoLabel>
                      <InfoValue>{v}</InfoValue>
                    </div>
                  ))}
                  <InfoToggle><ChevronDown size={20} strokeWidth={1.8} /></InfoToggle>
                </InfoBox>
                <Columns>
                  <StepsPanel>
                    <StepsHead>
                      <StepsTitle>ÜGYHÖZ TARTOZÓ LÉPÉSEK</StepsTitle>
                      <ChevronDown size={26} strokeWidth={2.4} color="#222" />
                    </StepsHead>
                    <StepsBody>
                      <StepsList>
                        <StepLine />
                        {steps.map(s => (
                          <Step key={s}><StepCheck><SmallCheck /></StepCheck><StepLabel>{s}</StepLabel></Step>
                        ))}
                        <Step $active><StepOpen /><StepLabel>Befejezés</StepLabel></Step>
                      </StepsList>
                      <StepsScroll>
                        <Arrow dir="up" />
                        <StepsThumb />
                        <StepsArrowDown><Arrow dir="down" /></StepsArrowDown>
                      </StepsScroll>
                    </StepsBody>
                  </StepsPanel>
                  <MainCol>
                    <Hero>
                      <HeroIcon><SuccessIcon /></HeroIcon>
                      <HeroText>
                        <HeroAccent />
                        <HeroTitle>Befejező lépés</HeroTitle>
                        <HeroDesc>Az ügy benyújtásának visszaigazolására és az ügyazonosító megjelenítésére szolgáló felület.</HeroDesc>
                      </HeroText>
                    </Hero>
                    <WhiteCard>
                      <Alert>
                        A beadvány benyújtása sikeresen megtörtént!<br />
                        Az Ön által benyújtott ügy azonosító száma: "FTTR/VVVZ/20250327/371"<br />
                        A benyújtott beadványok feldolgozása a hivatali nyitvatartási időben történik.<br />
                        A Tovább a nyitó oldalra funkció indításával visszalép az Ügykezelés oldalra.
                      </Alert>
                    </WhiteCard>
                  </MainCol>
                </Columns>
              </Content>
            </Page>
            <VScroll>
              <Arrow dir="up" />
              <BigThumbV />
              <VArrowDown><Arrow dir="down" /></VArrowDown>
            </VScroll>
          </ViewportUpper>
          <HScroll>
            <Arrow dir="left" />
            <HThumb />
            <HArrowRight><Arrow dir="right" /></HArrowRight>
          </HScroll>
        </Viewport>
      </ViewportWrap>
      <Taskbar>
        <Weather>
          <WeatherIcon />
          <WeatherText>17°C<br />Időnként napos</WeatherText>
        </Weather>
        <WinLogo />
        <SearchPill>
          <Search size={26} strokeWidth={2} color="#222" />
          <SearchLabel>Keresés</SearchLabel>
        </SearchPill>
        <TaskApps>
          <TaskViewTile><TaskViewIcon /></TaskViewTile>
          <TaskApp><ExplorerIcon /><TaskDot /></TaskApp>
          <TaskApp $active><EdgeIcon /><TaskBarActive /></TaskApp>
          <TaskApp><StoreIcon /></TaskApp>
          <TaskApp><WordIcon /><TaskDot /></TaskApp>
          <TaskApp><AcrobatIcon /><TaskDot /></TaskApp>
        </TaskApps>
        <Tray>
          <TrayChevron><ChevronUp size={24} strokeWidth={2} /></TrayChevron>
          <SyncIcon />
          <CloudOff />
          <NetIcon />
          <TrayTight><Volume2 size={26} strokeWidth={1.5} /></TrayTight>
          <TrayTight><BatteryIcon /></TrayTight>
          <Clock>13:24<br />2025. 03. 27.</Clock>
        </Tray>
      </Taskbar>
    </Screen>
  );
}
